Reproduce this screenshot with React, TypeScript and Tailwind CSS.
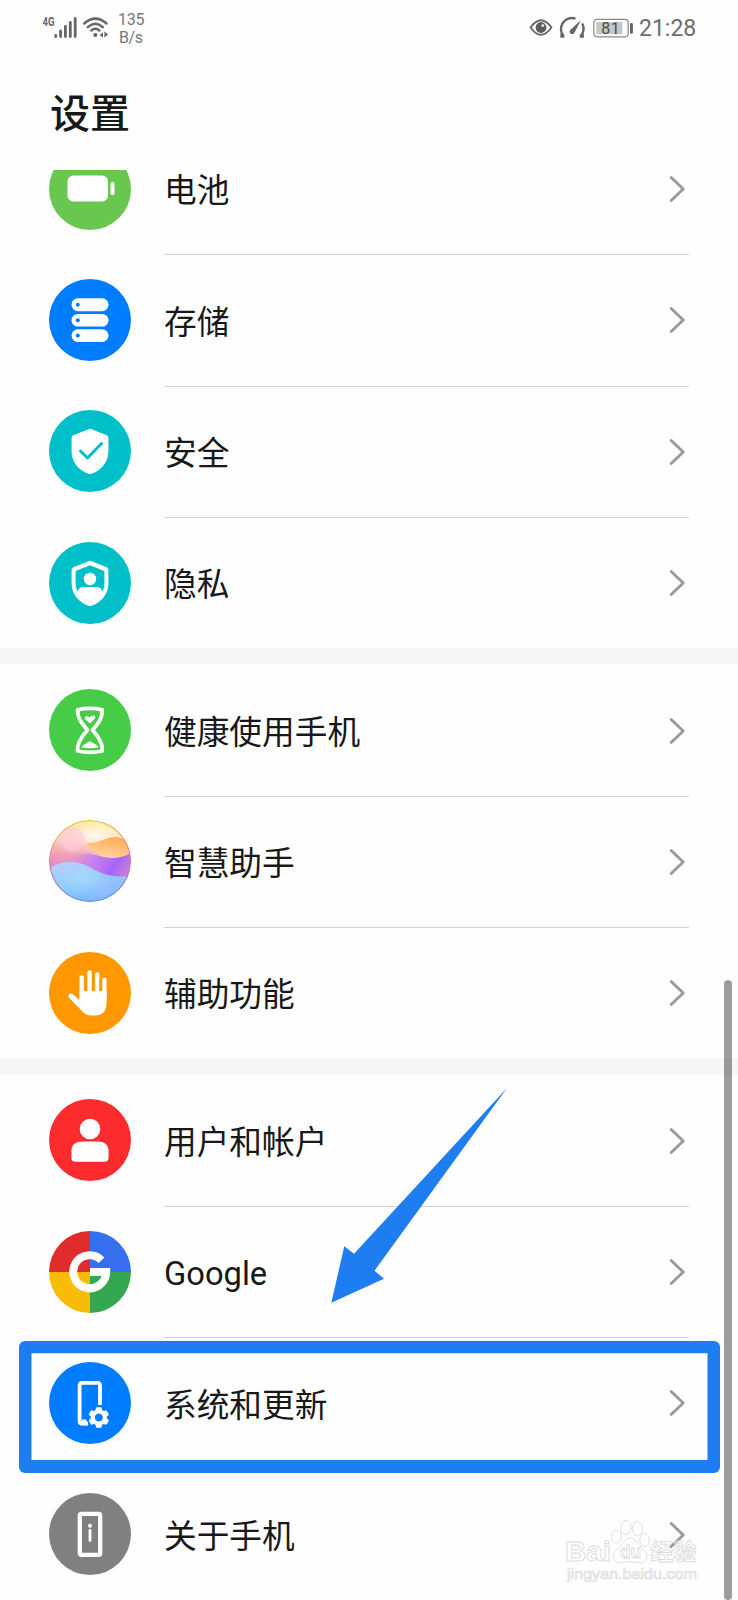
import type { ReactNode } from "react";

const Battery = () => (
  <svg viewBox="0 0 82 82" className="size-[82px]">
    <rect x="18.5" y="27.5" width="40.5" height="26" rx="6" fill="#fff" />
    <rect x="61.5" y="34" width="4" height="13" rx="1.8" fill="#fff" />
  </svg>
);

const Storage = () => (
  <svg viewBox="0 0 82 82" className="size-[82px]" fill="#fff">
    <rect x="22.5" y="19.2" width="37" height="13" rx="6.5" />
    <rect x="22.5" y="35" width="37" height="12.6" rx="6.3" />
    <rect x="22.5" y="50.3" width="37" height="12.6" rx="6.3" />
    <g fill="#007dff">
      <circle cx="28.8" cy="25.7" r="2" />
      <circle cx="28.8" cy="41.2" r="2" />
      <circle cx="28.8" cy="56.6" r="2" />
    </g>
  </svg>
);

const Security = () => (
  <svg viewBox="0 0 82 82" className="size-[82px]">
    <path d="M39.4 19.2Q41 18.3 42.6 19.2L57.6 25.2Q59.4 26 59.4 28V41.5C59.4 53 51 61 42.5 63.8Q41 64.3 39.5 63.8C31 61 22.6 53 22.6 41.5V28Q22.6 26 24.4 25.2Z" fill="#fff" />
    <path d="M31.5 41L38.5 48L52.5 33.5" fill="none" stroke="#00bfc9" strokeWidth="3" strokeLinecap="round" strokeLinejoin="round" />
  </svg>
);

const Privacy = () => (
  <svg viewBox="0 0 82 82" className="size-[82px]">
    <path d="M39.4 19.2Q41 18.3 42.6 19.2L57.6 25.2Q59.4 26 59.4 28V41.5C59.4 53 51 61 42.5 63.8Q41 64.3 39.5 63.8C31 61 22.6 53 22.6 41.5V28Q22.6 26 24.4 25.2Z" fill="#fff" />
    <path d="M41 23.3L55.4 29V41.5Q55.4 46 53.5 49.5C52.5 46.5 50.5 45 47.5 45H34.5C31.5 45 29.5 46.5 28.5 49.5Q26.6 46 26.6 41.5V29Z" fill="#00bfc9" />
    <circle cx="41" cy="37" r="6.2" fill="#fff" />
  </svg>
);

const Hourglass = () => (
  <svg viewBox="0 0 82 82" className="size-[82px]">
    <path d="M28.6 20.8Q41 18 53.2 20.8C54 29.5 48 35.5 43.5 41C48 46 54.5 53.5 53.2 62Q41 64.7 28.6 62C27.5 53.5 34 46 38.5 41C34 35.5 28 29.5 28.6 20.8Z" fill="none" stroke="#fff" strokeWidth="3.8" strokeLinejoin="round" />
    <path d="M41 34.5L36.2 30.3C34.4 28 38.5 25.9 40.6 28.7C41.7 26 47 25.3 46.3 29.1Z" fill="#fff" />
    <path d="M32.3 58.3Q34.5 55.3 38 54.1Q41 50.3 43.8 54.1Q47.8 55.3 49.8 58.3Q41 60.3 32.3 58.3Z" fill="#fff" />
  </svg>
);

const Assistant = () => (
  <svg viewBox="0 0 82 82" className="size-[82px]">
    <defs>
      <clipPath id="orb"><circle cx="41" cy="41" r="41" /></clipPath>
      <linearGradient id="orbBase" x1="0.55" y1="0" x2="0.45" y2="0.65">
        <stop offset="0" stopColor="#fff0a0" />
        <stop offset="0.4" stopColor="#fbdcc4" />
        <stop offset="0.72" stopColor="#f39fb6" />
        <stop offset="1" stopColor="#dd88cf" />
      </linearGradient>
      <linearGradient id="orbOrange" x1="0.8" y1="0" x2="0.35" y2="1">
        <stop offset="0" stopColor="#ffa850" />
        <stop offset="1" stopColor="#ffd6a2" />
      </linearGradient>
      <linearGradient id="orbPurple" x1="0" y1="0" x2="1" y2="0.3">
        <stop offset="0.1" stopColor="#ef8fb8" stopOpacity="0" />
        <stop offset="0.45" stopColor="#cd86ea" />
        <stop offset="0.82" stopColor="#a565f8" />
        <stop offset="1" stopColor="#c77bdc" />
      </linearGradient>
      <linearGradient id="orbBlue" x1="0.2" y1="0" x2="0.7" y2="1">
        <stop offset="0" stopColor="#bccdf8" />
        <stop offset="0.4" stopColor="#90cffc" />
        <stop offset="1" stopColor="#74b6fc" />
      </linearGradient>
      <linearGradient id="orbRim" x1="0.4" y1="0" x2="0.6" y2="1">
        <stop offset="0" stopColor="#e8c752" />
        <stop offset="0.5" stopColor="#d37597" />
        <stop offset="1" stopColor="#609adb" />
      </linearGradient>
      <radialGradient id="orbGlow">
        <stop offset="0" stopColor="#fff" stopOpacity="0.8" />
        <stop offset="1" stopColor="#fff" stopOpacity="0" />
      </radialGradient>
    </defs>
    <g clipPath="url(#orb)">
      <rect width="82" height="82" fill="url(#orbBase)" />
      <ellipse cx="47" cy="15" rx="26" ry="12" fill="url(#orbGlow)" />
      <circle cx="23" cy="19" r="12.5" fill="#ffc9dc" opacity="0.6" />
      <path d="M8 42Q26 30 46 35Q64 41 82 32V70H8Z" fill="url(#orbPurple)" />
      <path d="M37 23C50 24 56 17 67 17Q78 18 82 26V33C65 42 48 39 37 23Z" fill="url(#orbOrange)" />
      <path d="M0 49C12 40 29 40 42 48C54 55 66 58 82 56V82H0Z" fill="url(#orbBlue)" />
      <ellipse cx="34" cy="60" rx="28" ry="17" fill="url(#orbGlow)" opacity="0.25" />
      <path d="M52 53Q51 68 38 80Q65 79 80 56Q66 58 52 53Z" fill="#a8b9ff" opacity="0.4" />
    </g>
    <circle cx="41" cy="41" r="40.4" fill="none" stroke="url(#orbRim)" strokeWidth="1.1" />
  </svg>
);

const Hand = () => (
  <svg viewBox="0 0 82 82" className="size-[82px]">
    <path d="M30.5 48V39H57.5V51Q57.5 63.5 45.5 63.5H42.5Q36.5 63.5 32 58L20.2 46C18 43 21.5 40 24.3 42.5Z" fill="#fff" />
    <g stroke="#fff" strokeWidth="4.4" strokeLinecap="round">
      <path d="M32.7 25.5V46" />
      <path d="M40.6 20.5V44" />
      <path d="M48.2 22.5V44" />
      <path d="M55.4 28V47" />
    </g>
    <g stroke="#ff9800" strokeWidth="2.8">
      <path d="M36.6 26V38.5" />
      <path d="M44.4 25V38.5" />
      <path d="M51.8 28V38.5" />
    </g>
  </svg>
);

const User = () => (
  <svg viewBox="0 0 82 82" className="size-[82px]" fill="#fff">
    <circle cx="41" cy="30" r="10.3" />
    <path d="M33 42.5H49Q59.6 42.5 59.6 53V58.5Q59.6 62.8 55.3 62.8H26.7Q22.4 62.8 22.4 58.5V53Q22.4 42.5 33 42.5Z" />
  </svg>
);

const Google = () => (
  <svg viewBox="0 0 82 82" className="size-[82px]">
    <rect width="41" height="41" fill="#df2d2b" />
    <rect x="41" width="41" height="41" fill="#386ff0" />
    <rect y="41" width="41" height="41" fill="#f9bc06" />
    <rect x="41" y="41" width="41" height="41" fill="#34a750" />
    <path d="M52.5 29.2A16.5 16.5 0 1 0 57.2 41H41" fill="none" stroke="#fff" strokeWidth="8" />
  </svg>
);

const teeth = [0, 60, 120, 180, 240, 300];

const System = () => (
  <svg viewBox="0 0 82 82" className="size-[82px]">
    <path d="M51 43V23.5Q51 20.8 48.3 20.8H33.3Q30.6 20.8 30.6 23.5V59Q30.6 61.7 33.3 61.7H39" fill="none" stroke="#fff" strokeWidth="3.8" />
    <path d="M33 57.5H37L39.5 63.3H33Z" fill="#fff" />
    <g transform="translate(49.8 55.5)">
      <g fill="#fff">
        {teeth.map((angle) => (
          <rect key={angle} x="-3" y="-10.3" width="6" height="6" rx="1.4" transform={`rotate(${angle})`} />
        ))}
      </g>
      <circle r="6.1" fill="none" stroke="#fff" strokeWidth="4.2" />
    </g>
  </svg>
);

const About = () => (
  <svg viewBox="0 0 82 82" className="size-[82px]">
    <rect x="30.8" y="20.9" width="20.4" height="41" rx="1.8" fill="none" stroke="#fff" strokeWidth="4.3" />
    <circle cx="41" cy="32.8" r="2" fill="#fff" />
    <path d="M41 37.5V47.5" stroke="#fff" strokeWidth="2.8" strokeLinecap="round" />
  </svg>
);

type Item = { label: string; color: string; icon: ReactNode };

const groups: Item[][] = [
  [
    { label: "电池", color: "bg-[#69c750]", icon: <Battery /> },
    { label: "存储", color: "bg-[#007dff]", icon: <Storage /> },
    { label: "安全", color: "bg-[#00bfc9]", icon: <Security /> },
    { label: "隐私", color: "bg-[#00bfc9]", icon: <Privacy /> },
  ],
  [
    { label: "健康使用手机", color: "bg-[#47cc47]", icon: <Hourglass /> },
    { label: "智慧助手", color: "bg-white", icon: <Assistant /> },
    { label: "辅助功能", color: "bg-[#ff9800]", icon: <Hand /> },
  ],
  [
    { label: "用户和帐户", color: "bg-[#fc2b2d]", icon: <User /> },
    { label: "Google", color: "bg-white", icon: <Google /> },
    { label: "系统和更新", color: "bg-[#007dff]", icon: <System /> },
    { label: "关于手机", color: "bg-[#808080]", icon: <About /> },
  ],
];

function Row({ item, last }: { item: Item; last: boolean }) {
  return (
    <div className="flex h-[131.35px] shrink-0 items-center pl-[49px]">
      <div className={`size-[82px] shrink-0 overflow-hidden rounded-full ${item.color}`}>{item.icon}</div>
      <div className={`ml-[33px] mr-[49px] flex h-[132.35px] flex-1 items-center justify-between self-start border-b ${last ? "border-transparent" : "border-[#d2d2d2]"}`}>
        <span className="pt-[6px] text-[32.7px] leading-none text-[#181818]">{item.label}</span>
        <svg viewBox="0 0 18 28" className="mr-[3.5px] mt-px h-[28px] w-[18px]" fill="none" stroke="#999" strokeWidth="2.9" strokeLinecap="round" strokeLinejoin="round">
          <path d="M3.2 2.5L15.2 14L3.2 25.5" />
        </svg>
      </div>
    </div>
  );
}

function StatusBar() {
  return (
    <div className="flex h-[56px] shrink-0 items-start justify-between text-[#686868]">
      <div className="flex pl-[42px] pt-[12px]">
        <svg viewBox="0 0 68 30" className="h-[30px] w-[68px]">
          <text x="0.5" y="14" fontFamily="Roboto" fontSize="13" fontWeight="700" textLength="12" lengthAdjust="spacingAndGlyphs" fill="#666">4G</text>
          <g stroke="#666" strokeWidth="2.8" strokeLinecap="round">
            <path d="M13.7 23.5V24.5M18.6 19V24.5M23.4 14.5V24.5M28.3 10.5V24.5M33.2 6.5V24.5" />
          </g>
          <g fill="none" stroke="#666" strokeWidth="2.5" strokeLinecap="round">
            <path d="M42.2 11.5Q53.3 1.8 64.5 11.5" />
            <path d="M45.8 15.1Q53.3 8.4 60.8 15.1" />
            <path d="M49.3 18.5Q53.3 15 57.3 18.5" />
          </g>
          <circle cx="53.3" cy="23" r="2.1" fill="#666" />
          <path d="M57.6 23L61 20.3V25.7ZM66.2 22.5L62.4 19.4V25.6Z" fill="#666" />
        </svg>
        <div className="-mt-px pl-[8px] font-[Roboto] text-[16px] leading-[18px] text-[#777]">
          <div className="tracking-[-0.3px]">135</div>
          <div className="pl-px tracking-[-0.4px]">B/s</div>
        </div>
      </div>
      <div className="flex items-center pr-[42px] pt-[11px]">
        <svg viewBox="0 0 108 34" className="mr-px h-[34px] w-[108px]" fill="none" stroke="#666">
          <path d="M1.5 16.5Q12 2 22.5 16.5Q12 31 1.5 16.5Z" strokeWidth="1.8" strokeLinejoin="round" />
          <circle cx="12" cy="16.5" r="5.4" fill="#5c5c5c" stroke="none" />
          <circle cx="13.8" cy="14.6" r="1.5" fill="#ddd" stroke="none" />
          <path d="M35.2 25.8H32.2V22.8M50.8 25.8H54V22.8" strokeWidth="1.8" />
          <path d="M35 25.6A11 11 0 0 1 46.5 7.6M53.3 12.5A11 11 0 0 1 51.2 25.6" strokeWidth="2.4" />
          <path d="M51.8 9.3L41.8 18.4A2.6 2.6 0 1 0 45.6 21.6Z" fill="#666" stroke="none" />
          <rect x="64.8" y="8.4" width="34.4" height="17.4" rx="3.2" strokeWidth="1.2" stroke="#888" />
          <rect x="67.3" y="11" width="26" height="12.3" fill="#c6c6c6" stroke="none" />
          <rect x="101" y="12" width="2.9" height="10.8" rx="1.2" fill="#666" stroke="none" />
          <text x="81.8" y="22.7" textAnchor="middle" fontFamily="Roboto" fontSize="16" letterSpacing="0.6" fill="#4c4c4c" stroke="none">81</text>
        </svg>
        <span className="w-[58px] whitespace-nowrap pl-px pt-px font-[Roboto] text-[23px] leading-none text-[#6c6c6c]">21:28</span>
      </div>
    </div>
  );
}

function Watermark() {
  return (
    <svg viewBox="0 0 140 66" className="absolute left-[562px] top-[1517px] h-[66px] w-[140px]" fill="#fff" fillOpacity="0.2" stroke="#dcdcdc" strokeWidth="0.9">
      <text x="3" y="44" fontFamily="Liberation Sans" fontSize="28" fontWeight="700" textLength="46" lengthAdjust="spacingAndGlyphs">Bai</text>
      <ellipse cx="54.5" cy="19.5" rx="5" ry="6.6" />
      <ellipse cx="64" cy="10.5" rx="5.2" ry="7" />
      <ellipse cx="75.5" cy="11.5" rx="5.2" ry="7" />
      <ellipse cx="82.5" cy="23" rx="4.8" ry="6.6" />
      <path d="M52.5 34.5Q58 31 61 26Q68.5 15.5 76 26Q80 32 84 35.5C87.5 42 82 47.5 75 45.5Q68 44 61 45.5C54 47.5 49 41 52.5 34.5Z" />
      <text x="58" y="41" fontFamily="Liberation Sans" fontSize="19" fontWeight="700" textLength="21" lengthAdjust="spacingAndGlyphs">du</text>
      <text x="88.5" y="42.5" fontFamily="Noto Sans CJK SC" fontSize="23" fontWeight="700" textLength="46" lengthAdjust="spacingAndGlyphs">经验</text>
      <text x="5" y="61.5" fontFamily="Liberation Sans" fontSize="14" textLength="130" lengthAdjust="spacingAndGlyphs" strokeWidth="0.7">jingyan.baidu.com</text>
    </svg>
  );
}

export default function App() {
  return (
    <div className="relative flex h-[1600px] w-[738px] flex-col overflow-hidden bg-[#fefefe] font-[Roboto,'Noto_Sans_CJK_SC',sans-serif]">
      <StatusBar />
      <header className="flex h-[114px] shrink-0 items-center pl-[50px] pt-[3px]">
        <h1 className="text-[40px] font-medium leading-none text-[#181818]">设置</h1>
      </header>
      <main className="flex min-h-0 flex-1 flex-col justify-end overflow-hidden">
        <div className="flex flex-col gap-[16.2px] bg-[#f6f6f6]">
          {groups.map((group, index) => (
            <section key={index} className="flex flex-col bg-[#fefefe]">
              {group.map((item, i) => (
                <Row key={item.label} item={item} last={i === group.length - 1} />
              ))}
            </section>
          ))}
        </div>
      </main>
      <Watermark />
      <div className="absolute left-[724.4px] top-[980px] h-[619.5px] w-[7.4px] rounded-full bg-black/38" />
      <div className="absolute left-[19px] top-[1340.5px] h-[132.5px] w-[701px] rounded-[6px] bg-[#1e7df0] [clip-path:polygon(evenodd,0_0,100%_0,100%_100%,0_100%,0_0,12.5px_12.8px,688.5px_12.8px,688.5px_119.5px,12.5px_119.5px,12.5px_12.8px)]" />
      <svg viewBox="0 0 176 215" className="absolute left-[331px] top-[1088px] h-[215px] w-[176px]">
        <path d="M176 0L23 165.8L13.3 158.2L0.3 214.8L53 190.8L43.5 182.8Z" fill="#1e7df0" />
      </svg>
    </div>
  );
}
